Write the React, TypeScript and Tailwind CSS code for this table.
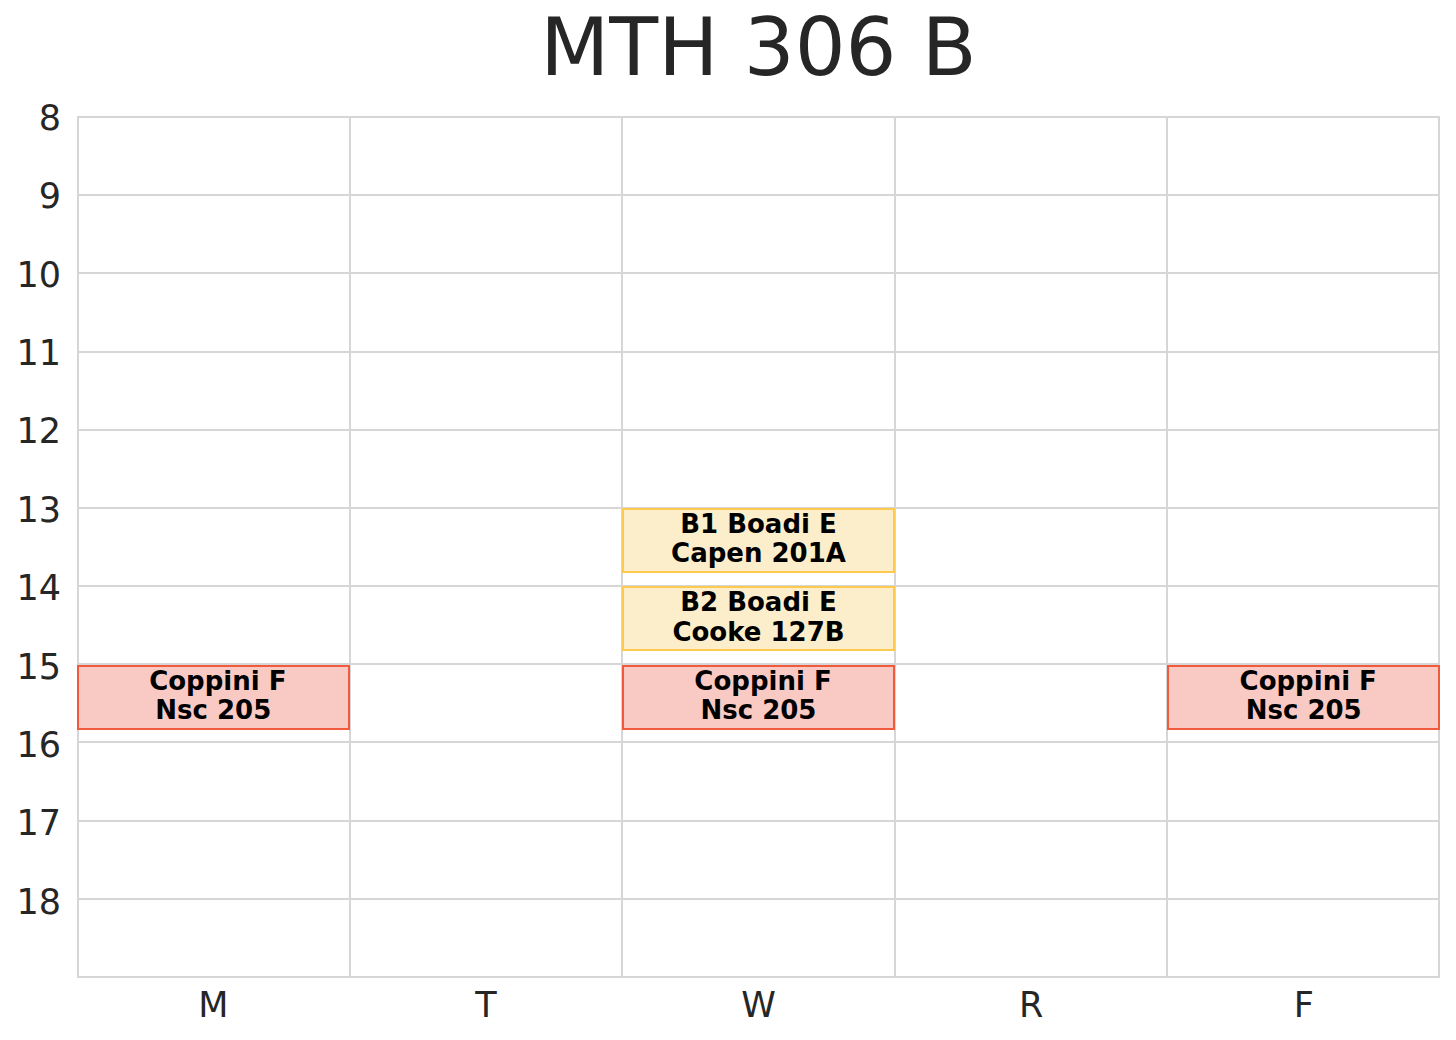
import React from "react";

const DAYS = ["M", "T", "W", "R", "F"];
const HOURS = [8, 9, 10, 11, 12, 13, 14, 15, 16, 17, 18];
const START = 8;
const HOUR_H = 862 / 11;
const COL_W = 1363 / 5;

type Session = {
  day: number;
  start: number;
  mins: number;
  label: string;
  kind: "lec" | "rec";
};

const sessions: Session[] = [
  { day: 0, start: 15, mins: 50, label: " Coppini F\nNsc 205", kind: "lec" },
  { day: 2, start: 15, mins: 50, label: " Coppini F\nNsc 205", kind: "lec" },
  { day: 4, start: 15, mins: 50, label: " Coppini F\nNsc 205", kind: "lec" },
  { day: 2, start: 13, mins: 50, label: "B1 Boadi E\nCapen 201A", kind: "rec" },
  { day: 2, start: 14, mins: 50, label: "B2 Boadi E\nCooke 127B", kind: "rec" },
];

export default function App() {
  return (
    <div className="w-[1456px] h-[1040px] bg-white font-['DejaVu_Sans',sans-serif] text-[#262626]">
      {/* title */}
      <div className="flex h-[116px] pt-[8px]">
        <div className="w-[77px] shrink-0" />
        <h1 className="w-[1363px] text-center text-[80px] leading-[80px] font-normal">
          MTH 306 B
        </h1>
      </div>

      <div className="flex">
        {/* hour axis */}
        <div className="w-[77px] shrink-0 flex flex-col pr-[16px]">
          {HOURS.map((h) => (
            <div key={h} className="h-[78.364px] flex items-start justify-end">
              <span className="text-[35px] leading-[35px] -translate-y-1/2 mt-[2px]">
                {h}
              </span>
            </div>
          ))}
        </div>

        {/* plot */}
        <div className="relative w-[1363px] h-[862px]">
          <div className="grid grid-cols-5 grid-rows-[repeat(11,minmax(0,1fr))] w-full h-full border-l-2 border-t-2 border-[#d6d6d6]">
            {HOURS.map((h) =>
              DAYS.map((d) => (
                <div key={h + d} className="border-r-2 border-b-2 border-[#d6d6d6]" />
              ))
            )}
          </div>

          {sessions.map((s, i) => (
            <div
              key={i}
              className={
                s.kind === "lec"
                  ? "absolute border-2 border-[#f25a3e] bg-[#f9cac3] flex justify-center"
                  : "absolute border-2 border-[#fdc94f] bg-[#fdeecb] flex justify-center"
              }
              style={{
                left: s.day * COL_W,
                top: (s.start - START) * HOUR_H,
                width: COL_W,
                height: (s.mins / 60) * HOUR_H,
              }}
            >
              <div className="whitespace-pre text-center font-bold text-black text-[26px] leading-[29.5px]">
                {s.label}
              </div>
            </div>
          ))}
        </div>
      </div>

      {/* day axis */}
      <div className="flex pt-[10px]">
        <div className="w-[77px] shrink-0" />
        <div className="w-[1363px] grid grid-cols-5">
          {DAYS.map((d) => (
            <div key={d} className="text-center text-[35px] leading-[35px]">
              {d}
            </div>
          ))}
        </div>
      </div>
    </div>
  );
}
